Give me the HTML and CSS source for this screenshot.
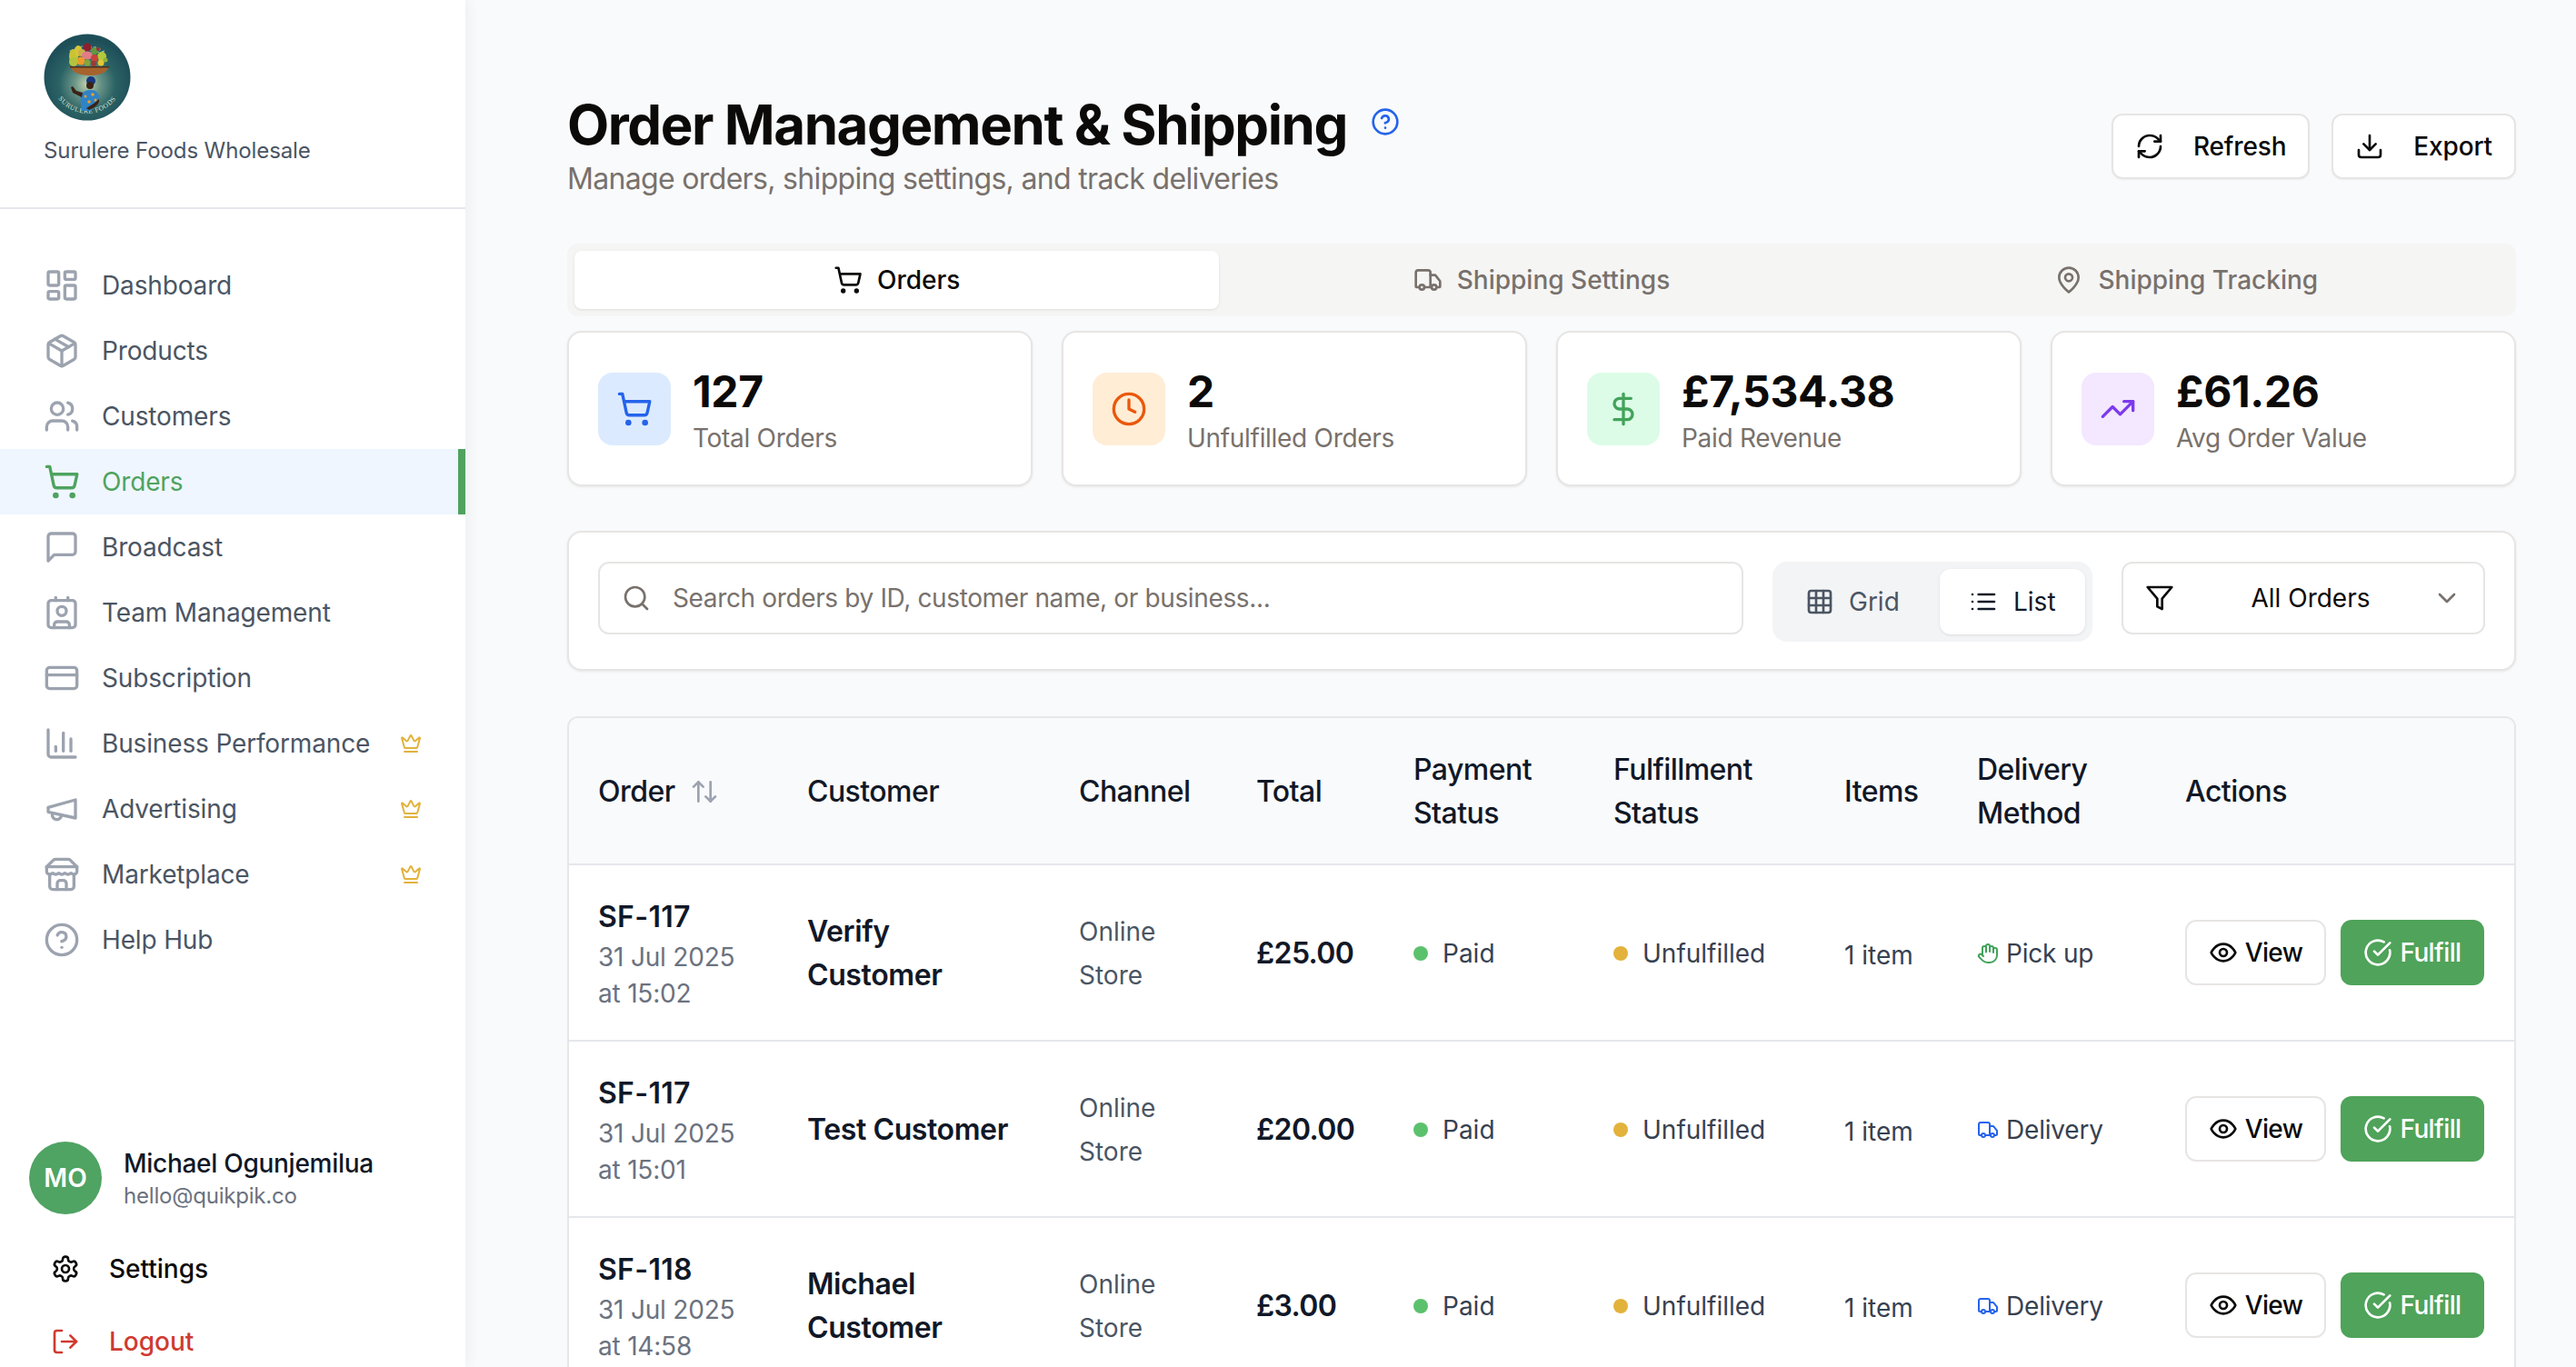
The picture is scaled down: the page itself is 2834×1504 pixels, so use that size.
FILE: index.html
```html
<!DOCTYPE html>
<html lang="en">
<head>
<meta charset="utf-8">
<title>Order Management &amp; Shipping</title>
<link rel="stylesheet" href="styles.css">
</head>
<body>
<svg class="sprite" aria-hidden="true">
  <symbol id="i-dash" viewBox="0 0 24 24"><rect x="3" y="3" width="7" height="9" rx="1"/><rect x="14" y="3" width="7" height="5" rx="1"/><rect x="14" y="12" width="7" height="9" rx="1"/><rect x="3" y="16" width="7" height="5" rx="1"/></symbol>
  <symbol id="i-package" viewBox="0 0 24 24"><path d="m7.5 4.27 9 5.15"/><path d="M21 8a2 2 0 0 0-1-1.73l-7-4a2 2 0 0 0-2 0l-7 4A2 2 0 0 0 3 8v8a2 2 0 0 0 1 1.73l7 4a2 2 0 0 0 2 0l7-4A2 2 0 0 0 21 16Z"/><path d="m3.3 7 8.7 5 8.7-5"/><path d="M12 22V12"/></symbol>
  <symbol id="i-users" viewBox="0 0 24 24"><path d="M16 21v-2a4 4 0 0 0-4-4H6a4 4 0 0 0-4 4v2"/><circle cx="9" cy="7" r="4"/><path d="M22 21v-2a4 4 0 0 0-3-3.87"/><path d="M16 3.13a4 4 0 0 1 0 7.75"/></symbol>
  <symbol id="i-cart" viewBox="0 0 24 24"><circle cx="8" cy="21" r="1"/><circle cx="19" cy="21" r="1"/><path d="M2.05 2.05h2l2.66 12.42a2 2 0 0 0 2 1.58h9.78a2 2 0 0 0 1.95-1.57l1.65-7.43H5.12"/></symbol>
  <symbol id="i-msg" viewBox="0 0 24 24"><path d="M21 15a2 2 0 0 1-2 2H7l-4 4V5a2 2 0 0 1 2-2h14a2 2 0 0 1 2 2z"/></symbol>
  <symbol id="i-contact" viewBox="0 0 24 24"><path d="M16 2v2"/><path d="M8 2v2"/><rect x="3" y="4" width="18" height="18" rx="2"/><circle cx="12" cy="11" r="3"/><path d="M7 22v-2a2 2 0 0 1 2-2h6a2 2 0 0 1 2 2v2"/></symbol>
  <symbol id="i-card" viewBox="0 0 24 24"><rect x="2" y="5" width="20" height="14" rx="2"/><path d="M2 10h20"/></symbol>
  <symbol id="i-chart" viewBox="0 0 24 24"><path d="M3 3v16a2 2 0 0 0 2 2h16"/><path d="M18 17V9"/><path d="M13 17V5"/><path d="M8 17v-3"/></symbol>
  <symbol id="i-mega" viewBox="0 0 24 24"><path d="m3 11 18-5v12L3 14v-3z"/><path d="M11.6 16.8a3 3 0 1 1-5.8-1.6"/></symbol>
  <symbol id="i-store" viewBox="0 0 24 24"><path d="m2 7 4.41-4.41A2 2 0 0 1 7.83 2h8.34a2 2 0 0 1 1.42.59L22 7"/><path d="M4 12v8a2 2 0 0 0 2 2h12a2 2 0 0 0 2-2v-8"/><path d="M15 22v-4a2 2 0 0 0-2-2h-2a2 2 0 0 0-2 2v4"/><path d="M2 7h20"/><path d="M22 7v3a2 2 0 0 1-2 2a2.7 2.7 0 0 1-1.59-.63.7.7 0 0 0-.82 0A2.7 2.7 0 0 1 16 12a2.7 2.7 0 0 1-1.59-.63.7.7 0 0 0-.82 0A2.7 2.7 0 0 1 12 12a2.7 2.7 0 0 1-1.59-.63.7.7 0 0 0-.82 0A2.7 2.7 0 0 1 8 12a2.7 2.7 0 0 1-1.59-.63.7.7 0 0 0-.82 0A2.7 2.7 0 0 1 4 12a2 2 0 0 1-2-2V7"/></symbol>
  <symbol id="i-help" viewBox="0 0 24 24"><circle cx="12" cy="12" r="10"/><path d="M9.09 9a3 3 0 0 1 5.83 1c0 2-3 3-3 3"/><path d="M12 17h.01"/></symbol>
  <symbol id="i-crown" viewBox="0 0 24 24"><path d="M11.562 3.266a.5.5 0 0 1 .876 0L15.39 8.87a1 1 0 0 0 1.516.294L21.183 5.5a.5.5 0 0 1 .798.519l-2.834 10.246a1 1 0 0 1-.956.734H5.81a1 1 0 0 1-.957-.734L2.02 6.02a.5.5 0 0 1 .798-.519l4.276 3.664a1 1 0 0 0 1.516-.294z"/><path d="M5 21h14"/></symbol>
  <symbol id="i-gear" viewBox="0 0 24 24"><path d="M12.22 2h-.44a2 2 0 0 0-2 2v.18a2 2 0 0 1-1 1.73l-.43.25a2 2 0 0 1-2 0l-.15-.08a2 2 0 0 0-2.73.73l-.22.38a2 2 0 0 0 .73 2.73l.15.1a2 2 0 0 1 1 1.72v.51a2 2 0 0 1-1 1.74l-.15.09a2 2 0 0 0-.73 2.73l.22.38a2 2 0 0 0 2.73.73l.15-.08a2 2 0 0 1 2 0l.43.25a2 2 0 0 1 1 1.73V20a2 2 0 0 0 2 2h.44a2 2 0 0 0 2-2v-.18a2 2 0 0 1 1-1.73l.43-.25a2 2 0 0 1 2 0l.15.08a2 2 0 0 0 2.73-.73l.22-.39a2 2 0 0 0-.73-2.73l-.15-.08a2 2 0 0 1-1-1.74v-.5a2 2 0 0 1 1-1.74l.15-.09a2 2 0 0 0 .73-2.73l-.22-.38a2 2 0 0 0-2.73-.73l-.15.08a2 2 0 0 1-2 0l-.43-.25a2 2 0 0 1-1-1.73V4a2 2 0 0 0-2-2z"/><circle cx="12" cy="12" r="3"/></symbol>
  <symbol id="i-logout" viewBox="0 0 24 24"><path d="M9 21H5a2 2 0 0 1-2-2V5a2 2 0 0 1 2-2h4"/><path d="m16 17 5-5-5-5"/><path d="M21 12H9"/></symbol>
  <symbol id="i-refresh" viewBox="0 0 24 24"><path d="M3 12a9 9 0 0 1 9-9 9.75 9.75 0 0 1 6.74 2.74L21 8"/><path d="M21 3v5h-5"/><path d="M21 12a9 9 0 0 1-9 9 9.75 9.75 0 0 1-6.74-2.74L3 16"/><path d="M8 16H3v5"/></symbol>
  <symbol id="i-download" viewBox="0 0 24 24"><path d="M21 15v4a2 2 0 0 1-2 2H5a2 2 0 0 1-2-2v-4"/><path d="m7 10 5 5 5-5"/><path d="M12 15V3"/></symbol>
  <symbol id="i-truck" viewBox="0 0 24 24"><path d="M14 18V6a2 2 0 0 0-2-2H4a2 2 0 0 0-2 2v11a1 1 0 0 0 1 1h2"/><path d="M15 18H9"/><path d="M19 18h2a1 1 0 0 0 1-1v-3.65a1 1 0 0 0-.22-.624l-3.48-4.35A1 1 0 0 0 17.52 8H14"/><circle cx="17" cy="18" r="2"/><circle cx="7" cy="18" r="2"/></symbol>
  <symbol id="i-pin" viewBox="0 0 24 24"><path d="M20 10c0 6-8 12-8 12s-8-6-8-12a8 8 0 0 1 16 0Z"/><circle cx="12" cy="10" r="3"/></symbol>
  <symbol id="i-clock" viewBox="0 0 24 24"><circle cx="12" cy="12" r="10"/><path d="M12 6v6l4 2"/></symbol>
  <symbol id="i-dollar" viewBox="0 0 24 24"><path d="M12 2v20"/><path d="M17 5H9.5a3.5 3.5 0 0 0 0 7h5a3.5 3.5 0 0 1 0 7H6"/></symbol>
  <symbol id="i-trend" viewBox="0 0 24 24"><path d="m22 7-8.5 8.5-5-5L2 17"/><path d="M16 7h6v6"/></symbol>
  <symbol id="i-search" viewBox="0 0 24 24"><circle cx="11" cy="11" r="8"/><path d="m21 21-4.3-4.3"/></symbol>
  <symbol id="i-grid" viewBox="0 0 24 24"><rect x="3" y="3" width="18" height="18" rx="2"/><path d="M3 9h18"/><path d="M3 15h18"/><path d="M9 3v18"/><path d="M15 3v18"/></symbol>
  <symbol id="i-list" viewBox="0 0 24 24"><path d="M3 12h.01"/><path d="M3 18h.01"/><path d="M3 6h.01"/><path d="M8 12h13"/><path d="M8 18h13"/><path d="M8 6h13"/></symbol>
  <symbol id="i-filter" viewBox="0 0 24 24"><path d="M22 3H2l8 9.46V19l4 2v-8.54z"/></symbol>
  <symbol id="i-chevron" viewBox="0 0 24 24"><path d="m6 9 6 6 6-6"/></symbol>
  <symbol id="i-sort" viewBox="0 0 24 24"><path d="m21 16-4 4-4-4"/><path d="M17 20V4"/><path d="m3 8 4-4 4 4"/><path d="M7 4v16"/></symbol>
  <symbol id="i-eye" viewBox="0 0 24 24"><path d="M2 12s3-7 10-7 10 7 10 7-3 7-10 7-10-7-10-7Z"/><circle cx="12" cy="12" r="3"/></symbol>
  <symbol id="i-check" viewBox="0 0 24 24"><path d="M21.801 10A10 10 0 1 1 17 3.335"/><path d="m9 11 3 3L22 4"/></symbol>
  <symbol id="i-hand" viewBox="0 0 24 24"><path d="M18 11V6a2 2 0 0 0-2-2a2 2 0 0 0-2 2"/><path d="M14 10V4a2 2 0 0 0-2-2a2 2 0 0 0-2 2v2"/><path d="M10 10.5V6a2 2 0 0 0-2-2a2 2 0 0 0-2 2v8"/><path d="M18 8a2 2 0 1 1 4 0v6a8 8 0 0 1-8 8h-2c-2.8 0-4.5-.86-5.99-2.34l-3.6-3.6a2 2 0 0 1 2.83-2.82L7 15"/></symbol>
</svg>

<div class="app">
  <aside class="sidebar">
    <div class="brand">
      <svg class="logo" viewBox="0 0 96 96">
        <defs>
          <radialGradient id="logoBg" cx="50%" cy="58%" r="52%"><stop offset="0" stop-color="#c3d2ae"/><stop offset=".28" stop-color="#6b9688"/><stop offset=".62" stop-color="#2c6365"/><stop offset="1" stop-color="#1e4f59"/></radialGradient>
          <path id="logoTop" d="M20 36A31 31 0 0 1 76 36"/>
          <path id="logoBottom" d="M11 62A39.500 39.500 0 0 0 85 62"/>
        </defs>
        <circle cx="48" cy="48" r="47.5" fill="url(#logoBg)"/>
        <text class="logo-text"><textPath href="#logoTop" startOffset="50%" text-anchor="middle">EST. 2024</textPath></text>
        <text class="logo-text"><textPath href="#logoBottom" startOffset="50%" text-anchor="middle">SURULERE FOODS</textPath></text>
        <ellipse cx="33" cy="25" rx="5" ry="8" fill="#c9c332"/>
        <ellipse cx="38" cy="19" rx="4" ry="6" fill="#d8c437"/>
        <circle cx="64" cy="25" r="5" fill="#b4c83c"/>
        <circle cx="48" cy="15" r="4.500" fill="#8d1f2e"/>
        <circle cx="42" cy="21" r="4" fill="#c9b04a"/>
        <circle cx="56" cy="19" r="4" fill="#5d9a41"/>
        <circle cx="60" cy="17" r="2" fill="#a12a35"/>
        <ellipse cx="48" cy="24" rx="6" ry="4.500" fill="#e17c88"/>
        <circle cx="41" cy="30" r="4.500" fill="#ef9a2b"/>
        <circle cx="56" cy="27" r="4" fill="#c7433b"/>
        <circle cx="33" cy="31" r="5" fill="#b3c43c"/>
        <circle cx="48" cy="32" r="3.500" fill="#87a63a"/>
        <circle cx="55" cy="33" r="3" fill="#9c3a34"/>
        <circle cx="63" cy="32" r="3.500" fill="#e6c634"/>
        <circle cx="68" cy="29" r="2.500" fill="#8eb13e"/>
        <path d="M29 36h43c-2 6-9 10-21 10s-20-4-22-10z" fill="#a6632c"/>
        <path d="M29 36h43v1.500H29z" fill="#4a2f1c"/>
        <circle cx="52" cy="52" r="5" fill="#17367f"/>
        <circle cx="51" cy="57" r="4" fill="#3a2216"/>
        <path d="M42 85c-1-6-2-12-1-17 2-5 7-6 11-6 5 0 9 3 9 8 0 3-3 6-6 8l-3 7z" fill="#2f83c6"/>
        <path d="M42 70 32 65l-2-6 2-1 4 5 7 2z" fill="#3a2216"/>
        <path d="M61 72c1 5-4 9-11 12l-3-2 8-5z" fill="#3a2216"/>
        <circle cx="46" cy="69" r="1.500" fill="#e8a02c"/><circle cx="54" cy="67" r="1.800" fill="#e8a02c"/><circle cx="50" cy="75" r="1.800" fill="#e8a02c"/><circle cx="57" cy="73" r="1.500" fill="#e8a02c"/>
      </svg>
      <div class="brand-name">Surulere Foods Wholesale</div>
    </div>
    <nav class="nav">
      <a class="nav-item"><svg class="ic nav-ic"><use href="#i-dash"/></svg><span>Dashboard</span></a>
      <a class="nav-item"><svg class="ic nav-ic"><use href="#i-package"/></svg><span>Products</span></a>
      <a class="nav-item"><svg class="ic nav-ic"><use href="#i-users"/></svg><span>Customers</span></a>
      <a class="nav-item active"><svg class="ic nav-ic"><use href="#i-cart"/></svg><span>Orders</span></a>
      <a class="nav-item"><svg class="ic nav-ic"><use href="#i-msg"/></svg><span>Broadcast</span></a>
      <a class="nav-item"><svg class="ic nav-ic"><use href="#i-contact"/></svg><span>Team Management</span></a>
      <a class="nav-item"><svg class="ic nav-ic"><use href="#i-card"/></svg><span>Subscription</span></a>
      <a class="nav-item"><svg class="ic nav-ic"><use href="#i-chart"/></svg><span>Business Performance</span><svg class="ic crown"><use href="#i-crown"/></svg></a>
      <a class="nav-item"><svg class="ic nav-ic"><use href="#i-mega"/></svg><span>Advertising</span><svg class="ic crown"><use href="#i-crown"/></svg></a>
      <a class="nav-item"><svg class="ic nav-ic"><use href="#i-store"/></svg><span>Marketplace</span><svg class="ic crown"><use href="#i-crown"/></svg></a>
      <a class="nav-item"><svg class="ic nav-ic"><use href="#i-help"/></svg><span>Help Hub</span></a>
    </nav>
    <div class="account">
      <div class="user">
        <div class="avatar">MO</div>
        <div class="user-info">
          <div class="user-name">Michael Ogunjemilua</div>
          <div class="user-mail">hello@quikpik.co</div>
        </div>
      </div>
      <a class="account-link"><svg class="ic ic-32"><use href="#i-gear"/></svg><span>Settings</span></a>
      <a class="account-link logout"><svg class="ic ic-32"><use href="#i-logout"/></svg><span>Logout</span></a>
    </div>
  </aside>

  <main class="main">
    <header class="page-head">
      <div>
        <div class="title-row">
          <h1 class="title">Order Management &amp; Shipping</h1>
          <svg class="ic ic-32 title-help"><use href="#i-help"/></svg>
        </div>
        <p class="subtitle">Manage orders, shipping settings, and track deliveries</p>
      </div>
      <div class="head-actions">
        <button class="head-btn refresh"><svg class="ic ic-32"><use href="#i-refresh"/></svg>Refresh</button>
        <button class="head-btn export"><svg class="ic ic-32"><use href="#i-download"/></svg>Export</button>
      </div>
    </header>

    <div class="tabs">
      <div class="tab on"><svg class="ic ic-32"><use href="#i-cart"/></svg>Orders</div>
      <div class="tab"><svg class="ic ic-32"><use href="#i-truck"/></svg>Shipping Settings</div>
      <div class="tab"><svg class="ic ic-32"><use href="#i-pin"/></svg>Shipping Tracking</div>
    </div>

    <section class="stats">
      <div class="stat"><div class="stat-ic blue"><svg class="ic ic-40"><use href="#i-cart"/></svg></div><div class="stat-text"><div class="stat-val">127</div><div class="stat-lab">Total Orders</div></div></div>
      <div class="stat"><div class="stat-ic orange"><svg class="ic ic-40"><use href="#i-clock"/></svg></div><div class="stat-text"><div class="stat-val">2</div><div class="stat-lab">Unfulfilled Orders</div></div></div>
      <div class="stat"><div class="stat-ic green"><svg class="ic ic-40"><use href="#i-dollar"/></svg></div><div class="stat-text"><div class="stat-val">£7,534.38</div><div class="stat-lab">Paid Revenue</div></div></div>
      <div class="stat"><div class="stat-ic purple"><svg class="ic ic-40"><use href="#i-trend"/></svg></div><div class="stat-text"><div class="stat-val">£61.26</div><div class="stat-lab">Avg Order Value</div></div></div>
    </section>

    <section class="filters">
      <div class="search"><svg class="ic ic-32"><use href="#i-search"/></svg><span>Search orders by ID, customer name, or business...</span></div>
      <div class="toggle">
        <div class="toggle-btn grid-btn"><svg class="ic ic-32"><use href="#i-grid"/></svg>Grid</div>
        <div class="toggle-btn list-btn"><svg class="ic ic-32"><use href="#i-list"/></svg>List</div>
      </div>
      <div class="select"><svg class="ic ic-32"><use href="#i-filter"/></svg><span class="select-val">All Orders</span><svg class="ic ic-32 chev"><use href="#i-chevron"/></svg></div>
    </section>

    <section class="table-card">
      <table class="orders">
        <colgroup><col class="c1"><col class="c2"><col class="c3"><col class="c4"><col class="c5"><col class="c6"><col class="c7"><col class="c8"><col class="c9"></colgroup>
        <thead>
          <tr>
            <th><span class="sort">Order<svg class="ic ic-32"><use href="#i-sort"/></svg></span></th>
            <th>Customer</th><th>Channel</th><th>Total</th><th>Payment Status</th><th>Fulfillment Status</th><th>Items</th><th>Delivery Method</th><th>Actions</th>
          </tr>
        </thead>
        <tbody>
          <tr>
            <td><div class="oid">SF-117</div><div class="odate">31 Jul 2025 at 15:02</div></td>
            <td class="cust">Verify Customer</td><td class="chan">Online Store</td><td class="total">£25.00</td>
            <td><span class="status"><i class="dot paid"></i>Paid</span></td>
            <td><span class="status"><i class="dot unf"></i>Unfulfilled</span></td>
            <td class="items">1 item</td>
            <td><span class="deliv"><svg class="ic ic-24 hand"><use href="#i-hand"/></svg>Pick up</span></td>
            <td><div class="acts"><button class="act view"><svg class="ic ic-32"><use href="#i-eye"/></svg>View</button><button class="act fulfill"><svg class="ic ic-32"><use href="#i-check"/></svg>Fulfill</button></div></td>
          </tr>
          <tr>
            <td><div class="oid">SF-117</div><div class="odate">31 Jul 2025 at 15:01</div></td>
            <td class="cust">Test Customer</td><td class="chan">Online Store</td><td class="total">£20.00</td>
            <td><span class="status"><i class="dot paid"></i>Paid</span></td>
            <td><span class="status"><i class="dot unf"></i>Unfulfilled</span></td>
            <td class="items">1 item</td>
            <td><span class="deliv"><svg class="ic ic-24 truck"><use href="#i-truck"/></svg>Delivery</span></td>
            <td><div class="acts"><button class="act view"><svg class="ic ic-32"><use href="#i-eye"/></svg>View</button><button class="act fulfill"><svg class="ic ic-32"><use href="#i-check"/></svg>Fulfill</button></div></td>
          </tr>
          <tr>
            <td><div class="oid">SF-118</div><div class="odate">31 Jul 2025 at 14:58</div></td>
            <td class="cust">Michael Customer</td><td class="chan">Online Store</td><td class="total">£3.00</td>
            <td><span class="status"><i class="dot paid"></i>Paid</span></td>
            <td><span class="status"><i class="dot unf"></i>Unfulfilled</span></td>
            <td class="items">1 item</td>
            <td><span class="deliv"><svg class="ic ic-24 truck"><use href="#i-truck"/></svg>Delivery</span></td>
            <td><div class="acts"><button class="act view"><svg class="ic ic-32"><use href="#i-eye"/></svg>View</button><button class="act fulfill"><svg class="ic ic-32"><use href="#i-check"/></svg>Fulfill</button></div></td>
          </tr>
        </tbody>
      </table>
    </section>
  </main>
</div>
</body>
</html>
```

FILE: styles.css
```css
* { box-sizing: border-box; }
html, body { margin: 0; height: 100%; overflow: hidden; }
body { font-family: Inter, "Noto Sans", sans-serif; background: #f9fafb; color: #0c0a09; font-size: 28px; }
.sprite { display: none; }
button { font: inherit; color: inherit; cursor: pointer; }
a { color: inherit; text-decoration: none; }
h1, p { margin: 0; }

.ic { fill: none; stroke: currentColor; stroke-width: 2; stroke-linecap: round; stroke-linejoin: round; flex: none; display: block; }
.ic-24 { width: 24px; height: 24px; }
.ic-32 { width: 32px; height: 32px; }
.ic-40 { width: 40px; height: 40px; }

.app { display: flex; height: 1504px; overflow: hidden; }

/* sidebar */
.sidebar { width: 512px; flex: none; height: 1504px; overflow: hidden; background: #fff; box-shadow: 0 0 16px rgba(0,0,0,.07); position: relative; z-index: 1; }
.brand { height: 230px; padding: 37px 48px 0; border-bottom: 2px solid #e5e7eb; }
.logo { display: block; width: 96px; height: 96px; }
.logo-text { font-family: "Liberation Serif", serif; font-size: 7.500px; fill: #dbe6d8; letter-spacing: .6px; }
.brand-name { margin-top: 15px; font-size: 24px; line-height: 36px; color: #4b5563; letter-spacing: -.1px; }
.nav { padding-top: 48px; }
.nav-item { display: flex; align-items: center; gap: 24px; height: 72px; padding-left: 48px; padding-right: 48px; color: #4b5563; font-weight: 400; white-space: nowrap; letter-spacing: -.15px; }
.nav-ic { width: 40px; height: 40px; color: #9ca3af; }
.crown { width: 24px; height: 24px; margin-left: auto; color: #e3b23c; }
.nav-item.active { background: #eff6ff; color: #4fa35f; border-right: 8px solid #4fa35f; }
.nav-item.active .nav-ic { color: #4fa35f; }
.account { margin-top: 186px; padding: 0 32px; }
.user { display: flex; align-items: center; gap: 24px; height: 80px; }
.avatar { width: 80px; height: 80px; border-radius: 50%; background: #4fa363; color: #fff; font-weight: 600; display: flex; align-items: center; justify-content: center; }
.user-name { color: #111827; font-weight: 500; line-height: 40px; letter-spacing: -.28px; }
.user-mail { color: #6b7280; font-size: 24px; line-height: 32px; letter-spacing: -.2px; }
.account-link { display: flex; align-items: center; gap: 32px; height: 80px; padding-left: 24px; font-weight: 500; color: #0c0a09; }
.user + .account-link { margin-top: 20px; }
.logout { color: #d03a30; }

/* main */
.main { flex: 1; min-width: 0; padding: 101px 66px 0 112px; }
.page-head { display: flex; justify-content: space-between; align-items: center; }
.title-row { display: flex; align-items: center; gap: 26px; }
.title { font-size: 60px; line-height: 72px; font-weight: 700; letter-spacing: -1.43px; color: #0c0a09; }
.title-help { color: #2563eb; margin-top: -6px; }
.subtitle { font-size: 32px; line-height: 48px; color: #78716c; letter-spacing: -.67px; }
.head-actions { display: flex; gap: 24px; }
.head-btn { display: flex; align-items: center; height: 72px; background: #fff; border: 2px solid #e7e5e4; border-radius: 12px; font-weight: 500; box-shadow: 0 1px 2px rgba(0,0,0,.05); padding: 0 24px; letter-spacing: -.15px; }
.refresh { gap: 32px; }
.export { gap: 32px; }

.tabs { display: grid; grid-template-columns: repeat(3, 1fr); margin-top: 47px; height: 80px; padding: 8px; background: #f5f5f4; border-radius: 12px; }
.tab { display: flex; align-items: center; justify-content: center; gap: 16px; color: #78716c; font-weight: 500; border-radius: 8px; }
.tab.on { background: #fff; color: #0c0a09; box-shadow: 0 1px 3px rgba(0,0,0,.1); }

.stats { display: grid; grid-template-columns: repeat(4, 1fr); gap: 32px; margin-top: 16px; }
.stat { display: flex; align-items: center; gap: 24px; height: 171px; padding: 0 32px; background: #fff; border: 2px solid #e7e5e4; border-radius: 16px; box-shadow: 0 1px 3px rgba(0,0,0,.08); }
.stat-ic { width: 80px; height: 80px; border-radius: 16px; display: flex; align-items: center; justify-content: center; flex: none; }
.blue { background: #dbeafe; color: #2563eb; }
.orange { background: #ffedd5; color: #ea580c; }
.green { background: #dcfce7; color: #43a35a; }
.purple { background: #f3e8ff; color: #7c3aed; }
.stat-text { padding-top: 4px; }
.stat-val { font-size: 48px; line-height: 60px; font-weight: 700; color: #0c0a09; letter-spacing: -.4px; }
.stat-lab { font-size: 28px; line-height: 42px; color: #78716c; letter-spacing: -.3px; }

.filters { display: flex; align-items: flex-start; gap: 32px; margin-top: 49px; padding: 32px 32px 30px; background: #fff; border: 2px solid #e7e5e4; border-radius: 16px; box-shadow: 0 1px 3px rgba(0,0,0,.08); }
.search { flex: 1; display: flex; align-items: center; gap: 24px; height: 80px; padding: 0 24px; border: 2px solid #e7e5e4; border-radius: 12px; color: #78716c; letter-spacing: -.36px; }
.toggle { display: flex; gap: 8px; width: 352px; height: 88px; padding: 8px; border-radius: 16px; background: #f3f4f6; }
.toggle-btn { display: flex; align-items: center; height: 72px; border-radius: 12px; flex: none; }
.grid-btn { color: #4b5563; gap: 16px; padding-left: 28px; width: 168px; }
.list-btn { background: #fff; color: #111827; gap: 17px; padding-left: 32px; width: 160px; box-shadow: 0 1px 3px rgba(0,0,0,.1); }
.select { width: 400px; height: 80px; display: flex; align-items: center; padding: 0 24px; border: 2px solid #e7e5e4; border-radius: 12px; color: #0c0a09; }
.select-val { flex: 1; text-align: center; padding-left: 16px; }
.chev { color: #78716c; }

.table-card { margin-top: 50px; background: #fff; border: 2px solid #e5e7eb; border-bottom: 0; border-radius: 12px 12px 0 0; overflow: hidden; }
.orders { width: 2140px; table-layout: fixed; border-spacing: 0; }
.c1 { width: 230px; } .c2 { width: 299px; } .c3 { width: 195px; } .c4 { width: 173px; } .c5 { width: 220px; }
.c6 { width: 254px; } .c7 { width: 146px; } .c8 { width: 229px; } .c9 { width: 394px; }
th { padding: 33px 32px 31px; background: #f9fafb; text-align: left; font-size: 32px; line-height: 48px; font-weight: 500; color: #111827; border-bottom: 2px solid #e5e7eb; letter-spacing: -.55px; }
td { padding: 33px 32px 31px; vertical-align: middle; border-bottom: 2px solid #e5e7eb; line-height: 48px; }
.sort { display: flex; align-items: center; gap: 16px; }
.sort .ic { color: #9ca3af; }
.oid { font-size: 32px; line-height: 48px; font-weight: 600; color: #111827; letter-spacing: .3px; }
.odate { font-size: 28px; line-height: 40px; color: #6b7280; letter-spacing: -.2px; }
.cust { font-size: 32px; font-weight: 600; color: #111827; letter-spacing: -.4px; }
.chan { color: #4b5563; }
.total { font-size: 32px; font-weight: 600; color: #111827; letter-spacing: -.6px; }
.status { display: flex; align-items: center; gap: 16px; color: #374151; }
.dot { width: 16px; height: 16px; border-radius: 50%; flex: none; }
.paid { background: #5cc16d; }
.unf { background: #e3b23c; }
.items { color: #374151; padding-top: 36px; }
.deliv { display: flex; align-items: center; gap: 8px; color: #374151; letter-spacing: -.2px; }
.hand { color: #43a35a; }
.truck { color: #2563eb; }
.acts { display: flex; gap: 16px; margin-top: -1px; margin-bottom: 1px; }
.act { display: flex; align-items: center; justify-content: center; gap: 8px; height: 72px; padding: 0; border-radius: 12px; font-weight: 500; letter-spacing: -.6px; }
.view { width: 155px; background: #fff; border: 2px solid #e7e5e4; color: #0c0a09; }
.fulfill { width: 158px; background: #4fa35a; border: 0; color: #fff; }
```
